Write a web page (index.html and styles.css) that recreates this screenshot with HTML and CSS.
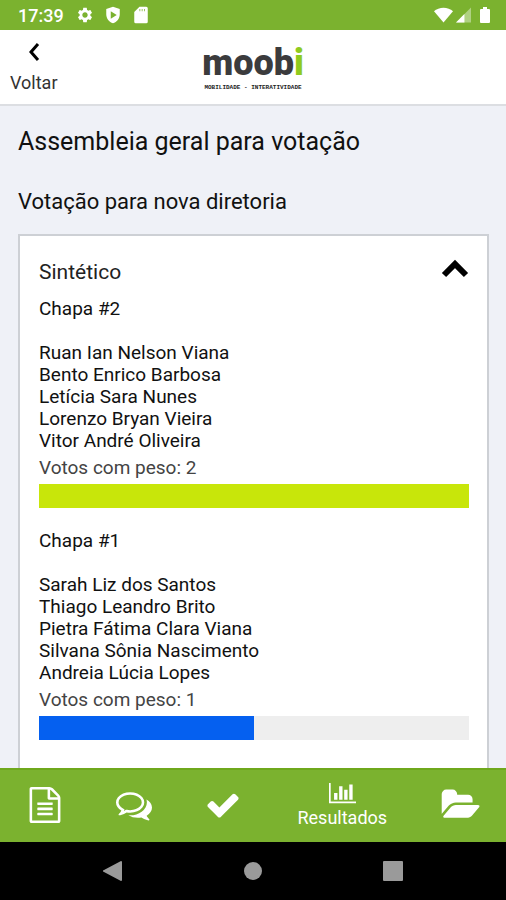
FILE: index.html
```html
<!DOCTYPE html>
<html lang="pt-BR">
<head>
  <meta charset="UTF-8">
  <meta name="viewport" content="width=device-width, initial-scale=1.0">
  <title>Moobi</title>
  <link rel="stylesheet" href="styles.css">
</head>
<body>
  <div class="status-bar">
    <span class="clock">17:39</span>
    <svg class="status-icon" viewBox="0 0 24 24"><path fill-rule="evenodd" d="M19.14 12.94c.04-.3.06-.61.06-.94 0-.32-.02-.64-.07-.94l2.03-1.58c.18-.14.23-.41.12-.61l-1.92-3.32c-.12-.22-.37-.29-.59-.22l-2.39.96c-.5-.38-1.03-.7-1.62-.94l-.36-2.54c-.04-.24-.24-.41-.48-.41h-3.84c-.24 0-.43.17-.47.41l-.36 2.54c-.59.24-1.13.57-1.62.94l-2.39-.96c-.22-.08-.47 0-.59.22L2.74 8.87c-.12.21-.08.47.12.61l2.03 1.58c-.05.3-.09.63-.09.94s.02.64.07.94l-2.03 1.58c-.18.14-.23.41-.12.61l1.92 3.32c.12.22.37.29.59.22l2.39-.96c.5.38 1.03.7 1.62.94l.36 2.54c.05.24.24.41.48.41h3.84c.24 0 .44-.17.47-.41l.36-2.54c.59-.24 1.13-.56 1.62-.94l2.39.96c.22.08.47 0 .59-.22l1.92-3.32c.12-.22.07-.47-.12-.61zM12 15.6c-1.98 0-3.6-1.62-3.6-3.6s1.62-3.6 3.6-3.6 3.6 1.62 3.6 3.6-1.62 3.6-3.6 3.6z"/></svg>
    <svg class="status-icon" viewBox="0 0 24 24"><path fill-rule="evenodd" d="M12 1 3 4v7c0 5.500 3.800 10.700 9 12 5.200-1.300 9-6.500 9-12V4zM9 7l8 5-8 5z"/></svg>
    <svg class="status-icon" viewBox="0 0 24 24"><path fill-rule="evenodd" d="M19 1h-9L3 8v13a2 2 0 0 0 2 2h14a2 2 0 0 0 2-2V3a2 2 0 0 0-2-2zM10 4h1v3h-1zM13 4h1v3h-1zM16 4h1v3h-1z"/></svg>
    <div class="signal">
      <svg class="wifi" viewBox="0 0 20 16"><path d="M10 16 0 4C5-1 15-1 20 4z"/></svg>
      <svg class="cell" viewBox="0 0 16 16"><path opacity=".4" d="M16 0v16H0z"/><path d="M9 7v9H0z"/></svg>
      <svg class="battery" viewBox="0 0 10 16"><path d="M3 0h4v2h2a1 1 0 0 1 1 1v12a1 1 0 0 1-1 1H1a1 1 0 0 1-1-1V3a1 1 0 0 1 1-1h2z"/></svg>
    </div>
  </div>

  <header class="header">
    <a class="back" href="#">
      <svg viewBox="0 0 12 20"><path d="M10 2 3 10l7 8"/></svg>
      Voltar
    </a>
    <div class="logo">
      <span class="logo-name">moob<span class="logo-accent">i</span></span>
      <span class="logo-tagline">MOBILIDADE - INTERATIVIDADE</span>
    </div>
  </header>

  <main class="content">
    <h1>Assembleia geral para votação</h1>
    <h2>Votação para nova diretoria</h2>

    <section class="card">
      <button class="card-toggle" type="button" aria-expanded="true">
        Sintético
        <svg viewBox="0 0 28 20"><path d="m3 17 11-11 11 11"/></svg>
      </button>

      <div class="result">
        <h3>Chapa #2</h3>
        <ul>
          <li>Ruan Ian Nelson Viana</li>
          <li>Bento Enrico Barbosa</li>
          <li>Letícia Sara Nunes</li>
          <li>Lorenzo Bryan Vieira</li>
          <li>Vitor André Oliveira</li>
        </ul>
        <label for="chapa-2">Votos com peso: 2</label>
        <progress class="lime" id="chapa-2" value="2" max="2"></progress>
      </div>

      <div class="result">
        <h3>Chapa #1</h3>
        <ul>
          <li>Sarah Liz dos Santos</li>
          <li>Thiago Leandro Brito</li>
          <li>Pietra Fátima Clara Viana</li>
          <li>Silvana Sônia Nascimento</li>
          <li>Andreia Lúcia Lopes</li>
        </ul>
        <label for="chapa-1">Votos com peso: 1</label>
        <progress class="blue" id="chapa-1" value="1" max="2"></progress>
      </div>
    </section>
  </main>

  <nav class="tabs">
    <a href="#" aria-label="Documento">
      <svg viewBox="0 0 1792 1792"><path d="M1596 380q28 28 48 76t20 88v1152q0 40-28 68t-68 28h-1344q-40 0-68-28t-28-68v-1600q0-40 28-68t68-28h896q40 0 88 20t76 48zm-444-244v376h376q-10-29-22-41l-313-313q-12-12-41-22zm384 1528v-1024h-416q-40 0-68-28t-28-68v-416h-768v1536h1280zm-1024-864q0-14 9-23t23-9h704q14 0 23 9t9 23v64q0 14-9 23t-23 9h-704q-14 0-23-9t-9-23v-64zm736 224q14 0 23 9t9 23v64q0 14-9 23t-23 9h-704q-14 0-23-9t-9-23v-64q0-14 9-23t23-9h704zm0 256q14 0 23 9t9 23v64q0 14-9 23t-23 9h-704q-14 0-23-9t-9-23v-64q0-14 9-23t23-9h704z"/></svg>
    </a>
    <a href="#" aria-label="Conversas">
      <svg viewBox="0 0 1792 1792"><path d="M704 384q-153 0-286 52t-211.500 141-78.500 191q0 82 53 158t149 132l97 56-35 84q34-20 62-39l44-31 53 10q78 14 153 14 153 0 286-52t211.500-141 78.500-191-78.500-191-211.500-141-286-52zm0-128q191 0 353.500 68.500t256.500 186.500 94 257-94 257-256.500 186.500-353.500 68.500q-86 0-176-16-124 88-278 128-36 9-86 16h-3q-11 0-20.500-8t-11.500-21q-1-3-1-6.500t.5-6.500 2-6l2.500-5 3.500-5.500 4-5 4.500-5 4-4.500q5-6 23-25t26-29.500 22.500-29 25-38.500 20.500-44q-124-72-195-177t-71-224q0-139 94-257t256.500-186.500 353.500-68.500zm822 1169q10 24 20.500 44t25 38.500 22.500 29 26 29.500 23 25q1 1 4 4.500t4.500 5 4 5 3.500 5.500l2.500 5 2 6 .5 6.500-1 6.500q-3 14-13 22t-22 7q-50-7-86-16-154-40-278-128-90 16-176 16-271 0-472-132 58 4 88 4 161 0 309-45t264-129q125-92 192-212t67-254q0-77-23-152 129 71 204 178t75 230q0 120-71 224.500t-195 176.500z"/></svg>
    </a>
    <a href="#" aria-label="Votar">
      <svg viewBox="0 0 1792 1792"><path d="M1671 566q0 40-28 68l-724 724-136 136q-28 28-68 28t-68-28l-136-136-362-362q-28-28-28-68t28-68l136-136q28-28 68-28t68 28l294 295 656-657q28-28 68-28t68 28l136 136q28 28 28 68z"/></svg>
    </a>
    <a class="active" href="#">
      <svg viewBox="0 0 2048 1792"><path d="M640 896v512h-256v-512h256zm384-512v1024h-256v-1024h256zm1024 1152v128h-2048v-1536h128v1408h1920zm-640-896v768h-256v-768h256zm384-384v1152h-256v-1152h256z"/></svg>
      Resultados
    </a>
    <a href="#" aria-label="Arquivos">
      <svg viewBox="0 0 1792 1792"><path d="M1815 952q0 31-31 66l-336 396q-43 51-120.500 86.500t-143.500 35.500h-1088q-34 0-60.500-13t-26.500-43q0-31 31-66l336-396q43-51 120.500-86.500t143.500-35.500h1088q34 0 60.500 13t26.500 43zm-343-344v160h-832q-94 0-197 47.500t-164 119.500l-337 396-5 6q0-4-.5-12.500t-.5-12.500v-960q0-92 66-158t158-66h320q92 0 158 66t66 158v32h544q92 0 158 66t66 158z"/></svg>
    </a>
  </nav>

  <div class="system-bar">
    <button type="button" aria-label="Voltar"><svg viewBox="0 0 20 20"><path d="M19 1v18a1 1 0 0 1-1 1L1 11a1 1 0 0 1 0-2L18 0a1 1 0 0 1 1 1z"/></svg></button>
    <button type="button" aria-label="Início"><svg viewBox="0 0 20 20"><circle cx="10" cy="10" r="9"/></svg></button>
    <button type="button" aria-label="Recentes"><svg viewBox="0 0 20 20"><rect width="20" height="20" rx="1"/></svg></button>
  </div>
</body>
</html>
```
FILE: styles.css
```css
* {
  box-sizing: border-box;
}

body {
  display: flex;
  flex-direction: column;
  height: 100vh;
  margin: 0;
  overflow: hidden;
  background-color: #eff1f7;
  color: #111;
  font-family: Roboto, "Liberation Sans", sans-serif;
  font-size: 18px;
}

a {
  color: inherit;
  text-decoration: none;
}

button {
  padding: 0;
  border: none;
  background: none;
  color: inherit;
  font: inherit;
  cursor: pointer;
}

h1, h2, h3, ul {
  margin: 0;
  padding: 0;
  font-size: inherit;
  font-weight: normal;
  list-style: none;
}

/* Android status bar */
.status-bar {
  display: flex;
  flex: none;
  align-items: center;
  gap: 10px;
  height: 30px;
  padding: 0 16px 0 18px;
  background-color: #7bb22f;
  color: #fff;
  fill: #fff;
}

.clock {
  margin-right: 2px;
  font-weight: 500;
}

.status-icon {
  width: 18px;
  height: 18px;
}

.signal {
  display: flex;
  align-items: center;
  gap: 3px;
  margin-left: auto;
}

.signal svg {
  height: 16px;
}

.wifi {
  width: 19px;
}

.cell {
  width: 15px;
}

.battery {
  width: 10px;
  margin-left: 6px;
}

/* Header */
.header {
  display: grid;
  flex: none;
  grid-template-columns: 1fr auto 1fr;
  height: 76px;
  border-bottom: 2px solid #dcdee2;
  background-color: #fff;
}

.back {
  display: flex;
  flex-direction: column;
  align-items: center;
  justify-self: start;
  gap: 9px;
  padding: 12px 0 0 10px;
  color: #333;
  line-height: 24px;
}

.back svg {
  width: 12px;
  height: 20px;
  fill: none;
  stroke: #000;
  stroke-width: 3;
}

.logo {
  display: flex;
  flex-direction: column;
  align-items: center;
  padding-top: 12px;
}

.logo-name {
  color: #3b3b3d;
  font-size: 36px;
  font-weight: 900;
  line-height: 42px;
}

.logo-accent {
  color: #8fcb1f;
}

.logo-tagline {
  color: #222;
  font-family: "Liberation Mono", monospace;
  font-size: 6px;
  font-weight: bold;
  line-height: 8px;
}

/* Results */
.content {
  flex: 1;
  min-height: 0;
  padding: 20px 17px 0 18px;
  overflow: hidden;
}

h1 {
  margin-bottom: 30px;
  font-size: 25px;
  line-height: 32px;
}

h2 {
  margin-bottom: 18px;
  font-size: 22px;
  line-height: 28px;
}

.card {
  padding: 20px 18px 26px 19px;
  border: 2px solid #cdd0d5;
  background-color: #fff;
}

.card-toggle {
  display: flex;
  align-items: center;
  justify-content: space-between;
  width: 100%;
  margin-bottom: 10px;
  color: #222;
  font-size: 21px;
  line-height: 32px;
}

.card-toggle svg {
  width: 28px;
  height: 20px;
  margin-bottom: 8px;
  fill: none;
  stroke: #000;
  stroke-width: 6;
}

.result {
  margin-bottom: 22px;
  font-size: 19px;
  line-height: 22px;
}

.result ul {
  margin: 22px 0 4px;
}

.result label {
  display: block;
  margin-bottom: 4px;
  color: #444;
  line-height: 24px;
}

progress {
  display: block;
  width: 100%;
  height: 24px;
  border: none;
  background-color: #eee;
  appearance: none;
}

progress::-webkit-progress-bar {
  background-color: #eee;
}

.lime::-webkit-progress-value {
  background-color: #c8e60a;
}

.blue::-webkit-progress-value {
  background-color: #0560f0;
}

/* Bottom tabs */
.tabs {
  display: grid;
  flex: none;
  grid-template-columns: 3fr 3fr 3fr 5fr 3fr;
  height: 74px;
  padding-bottom: 3px;
  border-top: 2px solid #6fa81c;
  background-color: #7bb22f;
  color: #fff;
  fill: #fff;
}

.tabs a {
  display: flex;
  flex-direction: column;
  align-items: center;
  justify-content: center;
  gap: 2px;
}

.tabs svg {
  width: 36px;
  height: 36px;
  overflow: visible;
}

.tabs .active svg {
  width: 27px;
  height: 24px;
}

.system-bar {
  display: flex;
  flex: none;
  align-items: center;
  justify-content: center;
  gap: 120px;
  height: 58px;
  background-color: #000;
}

.system-bar svg {
  display: block;
  width: 20px;
  height: 20px;
  fill: #9a9a9a;
}
```
